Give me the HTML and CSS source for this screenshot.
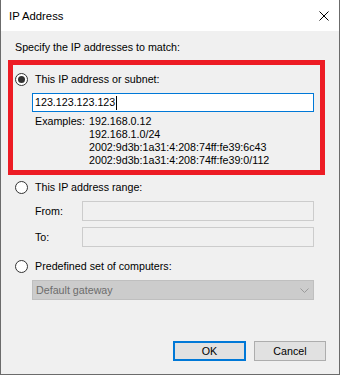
FILE: index.html
```html
<!DOCTYPE html>
<html lang="en">

<head>
  <meta charset="UTF-8">
  <meta name="viewport" content="width=device-width, initial-scale=1.0">
  <title>IP Address</title>

  <link rel="stylesheet" href="styles.css">
</head>

<body>
  <div class="dialog">
    <div class="titlebar">
      <span class="title">IP Address</span>
      <svg class="close" width="10" height="10" viewBox="0 0 10 10">
        <path d="M0.5 0.5 L9.5 9.5 M9.5 0.5 L0.5 9.5" stroke="#000" stroke-width="1" fill="none"/>
      </svg>
    </div>

    <div class="content">
      <p class="intro">Specify the IP addresses to match:</p>

      <div class="highlight">
        <label class="option"><span class="radio checked"></span>This IP address or subnet:</label>
        <div class="textbox active">123.123.123.123<span class="caret"></span></div>
        <div class="examples">
          <span class="examples-label">Examples:</span>
          <div class="examples-list">
            <div>192.168.0.12</div>
            <div>192.168.1.0/24</div>
            <div>2002:9d3b:1a31:4:208:74ff:fe39:6c43</div>
            <div>2002:9d3b:1a31:4:208:74ff:fe39:0/112</div>
          </div>
        </div>
      </div>

      <label class="option outside range-option"><span class="radio"></span>This IP address range:</label>
      <div class="range-row">
        <span class="range-label">From:</span>
        <div class="textbox disabled"></div>
      </div>
      <div class="range-row">
        <span class="range-label">To:</span>
        <div class="textbox disabled"></div>
      </div>

      <label class="option outside predefined-option"><span class="radio"></span>Predefined set of computers:</label>
      <div class="combo">
        <span>Default gateway</span>
        <svg class="chevron" width="9" height="5" viewBox="0 0 9 5">
          <path d="M0.5 0.5 L4.5 4.5 L8.5 0.5" stroke="#9a9a9a" stroke-width="1" fill="none"/>
        </svg>
      </div>

      <div class="buttons">
        <button class="btn default">OK</button>
        <button class="btn cancel">Cancel</button>
      </div>
    </div>
  </div>
</body>
</html>
```

FILE: styles.css
```css
* {
	box-sizing: border-box;
}

body {
	margin: 0;
	padding: 0;
	font-family: "Liberation Sans", Arial, sans-serif;
	font-size: 10.7px;
	color: #000;
	background: #f0f0f0;
}

.dialog {
	width: 340px;
	height: 375px;
	display: flex;
	flex-direction: column;
	background: #f0f0f0;
	border: 1px solid #6b6b6b;
	border-top: none;
}

.titlebar {
	height: 31px;
	flex-shrink: 0;
	display: flex;
	align-items: center;
	justify-content: space-between;
	padding: 0 10px 0 8px;
	background: #fff;
}

.title {
	font-size: 11.3px;
	padding-top: 1px;
}

.content {
	flex: 1;
	display: flex;
	flex-direction: column;
}

.intro {
	margin: 8px 0 0 14px;
	line-height: 16px;
}

.highlight {
	width: 317px;
	margin: 5px 0 0 7px;
	padding: 6px 0 3px 2px;
	border: 5px solid #ed1c24;
}

.option {
	display: flex;
	align-items: center;
	gap: 7px;
	height: 16px;
	line-height: 16px;
}

.option.outside {
	margin-left: 14px;
}

.range-option {
	margin-top: 4px;
}

.predefined-option {
	margin-top: 11px;
}

.radio {
	width: 13px;
	height: 13px;
	flex-shrink: 0;
	display: flex;
	align-items: center;
	justify-content: center;
	border: 1px solid #333;
	border-radius: 50%;
	background: #fff;
}

.radio.checked::after {
	content: "";
	width: 7px;
	height: 7px;
	border-radius: 50%;
	background: #333;
}

.textbox {
	height: 20px;
	border: 1px solid #ccc;
	background: #f0f0f0;
}

.textbox.active {
	width: 282px;
	height: 19px;
	margin: 6px 0 0 17px;
	padding-left: 2px;
	display: flex;
	align-items: center;
	line-height: 17px;
	border-color: #0078d7;
	background: #fff;
}

.caret {
	width: 1px;
	height: 14px;
	margin-left: 1px;
	background: #000;
}

.examples {
	display: flex;
	margin: 3px 0 0 20px;
	line-height: 13px;
}

.examples-label {
	width: 54px;
}

.range-row {
	display: flex;
	align-items: center;
	margin-top: 6px;
	padding-left: 34px;
}

.range-label {
	width: 47px;
}

.range-row .textbox {
	width: 232px;
}

.combo {
	width: 282px;
	height: 20px;
	margin: 6px 0 0 31px;
	padding: 0 4px 0 3px;
	display: flex;
	align-items: center;
	justify-content: space-between;
	color: #6d6d6d;
	background: #ccc;
	border: 1px solid #bfbfbf;
}

.buttons {
	margin-top: auto;
	display: flex;
	justify-content: flex-end;
	gap: 8px;
	padding: 0 13px 13px 0;
}

.btn {
	height: 20px;
	padding: 0;
	font-family: inherit;
	font-size: 10.7px;
	color: #000;
	background: #e1e1e1;
	border: 1px solid #adadad;
}

.btn.default {
	width: 73px;
	border: 2px solid #0078d7;
}

.btn.cancel {
	width: 72px;
}
```
